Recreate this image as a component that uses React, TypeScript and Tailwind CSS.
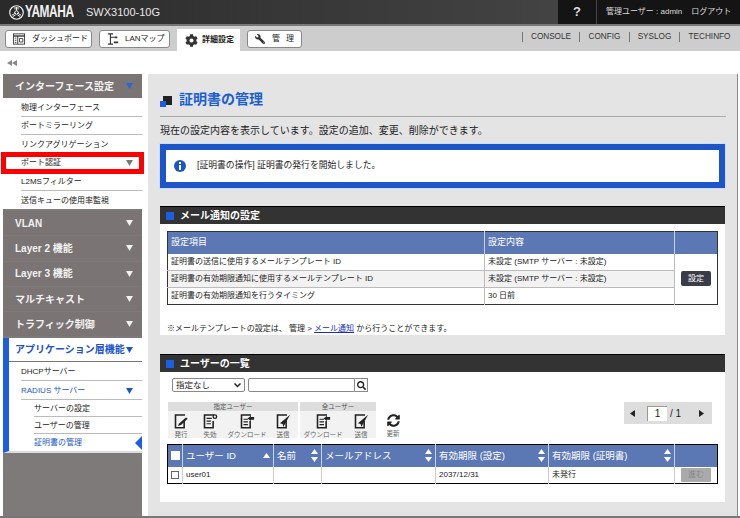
import { FaCog, FaSearch, FaSyncAlt, FaWrench } from "react-icons/fa";

const font = { fontFamily: '"Liberation Sans", "Noto Sans CJK JP", sans-serif' };

function Tri({ className = "" }: { className?: string }) {
  return (
    <svg width="7" height="6" viewBox="0 0 8 7" className={className}>
      <path d="M0 0h8L4 7z" fill="currentColor" />
    </svg>
  );
}

function YamahaMark() {
  return (
    <svg width="15" height="15" viewBox="0 0 30 30" fill="none" stroke="#eee">
      <circle cx="15" cy="15" r="13.5" strokeWidth="2.4" />
      <circle cx="15" cy="15" r="3.5" strokeWidth="2" />
      <path d="M15 11V4M12 4v5M18 4v5M11.6 17l-6 3.5M10 15l4 2.4M13 20l-5.5 3M18.4 17l6 3.5M20 15l-4 2.4M17 20l5.5 3" strokeWidth="2" />
    </svg>
  );
}

function DashIcon() {
  return (
    <svg width="12" height="12" viewBox="0 0 14 13" fill="none" stroke="#333">
      <rect x="0.5" y="0.5" width="13" height="12" />
      <path d="M0.5 3h13" strokeWidth="1.6" />
      <path d="M5.5 3v9.5" />
      <path d="M2 5.5h2M2 8h2M2 10.5h2M7.5 6h4v4h-4z" />
    </svg>
  );
}

function LanIcon() {
  return (
    <svg width="12" height="14" viewBox="0 0 14 14" fill="none" stroke="#333">
      <path d="M1 1h6M4 1v12M4 5h5M1 13h6" strokeWidth="1.3" />
      <path d="M9 4h3v2H9zM8 10h5v2H8z" fill="#333" stroke="none" />
    </svg>
  );
}

type DocKind = "issue" | "revoke" | "download" | "send";

function DocIcon({ kind }: { kind: DocKind }) {
  return (
    <svg width="15" height="15" viewBox="0 0 16 17" fill="none" className="text-[#222]">
      <path d="M11 8v7.5H1.200V1.200H12" stroke="currentColor" strokeWidth="1.800" />
      {kind === "issue" && <path d="M5 11l8-7 2 1.500-7.500 7L4 13.500z" fill="currentColor" />}
      {kind === "revoke" && (
        <>
          <path d="M3.500 5h6M3.500 8h5M3.500 11h5" stroke="currentColor" strokeWidth="1.300" />
          <circle cx="13" cy="3" r="2" stroke="currentColor" strokeWidth="1.500" />
        </>
      )}
      {kind === "download" && (
        <>
          <path d="M3.500 6h5M3.500 9h5M3.500 12h5" stroke="currentColor" strokeWidth="1.300" />
          <path d="M8 5l4-3v1.500h3.500v3H12V8z" fill="currentColor" />
        </>
      )}
      {kind === "send" && <path d="M15.500 0.800L4 10.500l3 .8.800 3.500z" fill="currentColor" />}
    </svg>
  );
}

function ToolBtn({ w, label, kind }: { w: string; label: string; kind: DocKind }) {
  return (
    <div className={`flex flex-col items-center bg-[#f2f2f2] h-[27px] pt-[3px] ${w}`}>
      <DocIcon kind={kind} />
      <span className="mt-[2px] text-[6.500px] leading-[7px] text-[#666] whitespace-nowrap">{label}</span>
    </div>
  );
}

function SortArrows() {
  return (
    <span className="flex flex-col gap-[3px] text-white">
      <svg width="7" height="5" viewBox="0 0 7 5"><path d="M0 5h7L3.500 0z" fill="currentColor" /></svg>
      <svg width="7" height="5" viewBox="0 0 7 5"><path d="M0 0h7L3.500 5z" fill="currentColor" /></svg>
    </span>
  );
}

function SectionHead({ title }: { title: string }) {
  return (
    <div className="h-[18px] bg-[#333] border-t border-black flex items-center pl-[6px] gap-[6px]">
      <span className="w-2 h-2 bg-[#1b5fe0]" />
      <span className="text-[10px] font-bold text-white">{title}</span>
    </div>
  );
}

function SideHead({ label }: { label: string }) {
  return (
    <div className="h-[24.300px] bg-[#7a7474] mb-px flex items-center justify-between pl-[12px] pr-[9px] text-[#f2f2f2] font-bold text-[10px]">
      {label}
      <Tri />
    </div>
  );
}

function SideRow({ label, className = "h-[18.500px]" }: { label: string; className?: string }) {
  return (
    <div className={`flex items-center pt-[2px] text-[8px] text-[#222] border-b border-[#bbb] ${className}`}>
      {label}
    </div>
  );
}

export default function App() {
  return (
    <div style={font} className="w-[740px] h-[518px] overflow-hidden bg-white flex flex-col text-[#222]">
      {/* top bar */}
      <div className="h-[24px] flex bg-gradient-to-r from-[#2a2a2a] to-[#4c4c4c]">
        <div className="flex-1 flex items-center pl-[9px]">
          <YamahaMark />
          <span className="ml-px w-[49px] origin-left scale-x-[.7] text-[17px] leading-[24px] font-bold text-[#f0f0f0] tracking-[-0.600px] whitespace-nowrap">YAMAHA</span>
          <span className="ml-[12px] text-[11px] text-[#e8e8e8]">SWX3100-10G</span>
        </div>
        <div className="w-[182px] bg-[#141414] flex items-center text-[#ddd]">
          <span className="w-[39px] text-center text-[13px] font-bold border-r border-[#444] leading-[24px]">?</span>
          <span className="ml-[9px] text-[8px] whitespace-nowrap">管理ユーザー : admin</span>
          <span className="ml-[9px] text-[8px] whitespace-nowrap">ログアウト</span>
        </div>
      </div>
      <div className="h-[2px] bg-[#777]" />

      {/* nav */}
      <div className="h-[25px] bg-[#cdcdcd] flex items-end pl-[5px]">
        <div className="flex gap-[7px] items-start h-[22px]">
          <div className="mt-px w-[87px] h-[18px] bg-white border border-[#888] rounded-[3px] flex items-center pl-[7px] gap-[7px] text-[8px] whitespace-nowrap">
            <DashIcon />
            ダッシュボード
          </div>
          <div className="mt-px w-[71px] h-[18px] bg-white border border-[#888] rounded-[3px] flex items-center pl-[7px] gap-[6px] text-[8px] whitespace-nowrap">
            <LanIcon />
            LANマップ
          </div>
          <div className="w-[63px] h-[22px] bg-white flex items-center pl-[8px] gap-[4px] text-[8px] font-bold whitespace-nowrap">
            <FaCog size={13} className="text-[#333]" />
            詳細設定
          </div>
          <div className="mt-px w-[55px] h-[18px] bg-white border border-[#888] rounded-[3px] flex items-center pl-[7px] gap-[7px] text-[8px] whitespace-nowrap">
            <FaWrench size={10} className="text-[#333] -scale-x-100" />
            <span className="tracking-[6px]">管理</span>
          </div>
        </div>
        <div className="ml-auto self-center mb-[4px] flex items-center text-[8.200px] text-[#333] pr-px">
          {["CONSOLE", "CONFIG", "SYSLOG", "TECHINFO"].map((t, i) => (
            <span key={t} className={`border-l border-[#777] h-[10px] leading-[10px] text-center ${["w-[57px]", "w-[50px]", "w-[50px]", "w-[60px]"][i]}`}>
              {t}
            </span>
          ))}
        </div>
      </div>

      {/* collapse row */}
      <div className="h-[23px] flex items-center pl-[7px] text-[#888]">
        <svg width="10" height="6" viewBox="0 0 10 6"><path d="M5 0v6L0 3zM10 0v6L5 3z" fill="currentColor" /></svg>
      </div>

      <div className="flex-1 min-h-0 flex pl-[3px] pr-[2px] border-b-2 border-[#777]">
        {/* sidebar */}
        <div className="relative w-[139px] shrink-0 bg-[#7f7a7a] flex flex-col">
          <div className="h-[24px] bg-[#7a7474] flex items-center justify-between pl-[12px] pr-[9px] text-[#f2f2f2] font-bold text-[10px]">
            インターフェース設定
            <Tri className="text-[#2466e0]" />
          </div>
          <div className="bg-white pl-[18px] mb-[2px]">
            <SideRow label="物理インターフェース" />
            <SideRow label="ポートミラーリング" />
            <SideRow label="リンクアグリゲーション" />
            <div className="h-[18.500px] flex items-center justify-between pt-[2px] pr-[9px] text-[8px] border-b border-[#bbb]">
              ポート認証
              <Tri className="text-[#777]" />
            </div>
            <SideRow label="L2MSフィルター" />
            <SideRow label="送信キューの使用率監視" className="h-[18.500px] border-b-0" />
          </div>
          <SideHead label="VLAN" />
          <SideHead label="Layer 2 機能" />
          <SideHead label="Layer 3 機能" />
          <SideHead label="マルチキャスト" />
          <SideHead label="トラフィック制御" />
          <div className="bg-white border-l-[6px] border-[#1b5fe0] mt-px border-b-2 border-b-[#ddd]">
            <div className="h-[24px] flex items-center justify-between pl-[6px] pr-[9px] text-[#1b55c8] font-bold text-[10px] border-b border-[#777]">
              <span className="whitespace-nowrap">アプリケーション層機能</span>
              <Tri className="shrink-0" />
            </div>
            <div className="pl-[12px]">
              <SideRow label="DHCPサーバー" className="h-[19px]" />
              <div className="h-[19px] flex items-center justify-between pt-[2px] pr-[9px] text-[8px] text-[#1b55c8] border-b border-[#bbb]">
                RADIUS サーバー
                <Tri />
              </div>
            </div>
            <div className="pl-[25px]">
              <SideRow label="サーバーの設定" className="h-[17px]" />
              <SideRow label="ユーザーの管理" className="h-[17px]" />
              <div className="relative h-[17px] flex items-center text-[8px] text-[#1b55c8]">
                証明書の管理
                <svg width="7" height="14" viewBox="0 0 7 14" className="absolute right-0 top-[2px]"><path d="M7 0v14L0 7z" fill="#1b5fe0" /></svg>
              </div>
            </div>
          </div>
          {/* highlight drawn over the menu */}
          <div className="absolute left-[-2px] top-[78px] w-[143px] h-[22px] border-[5px] border-[#f00]" />
        </div>

        {/* content */}
        <div className="flex-1 ml-[6px] bg-[#e4e4e4] border-r border-[#888] px-[12px] pt-[17px] text-[8px]">
          <div className="flex items-center gap-[7px] h-[18px] pb-px">
            <svg width="12" height="12" viewBox="0 0 12 12" className="mt-[2px]">
              <rect x="3" y="1" width="9" height="9" fill="#222" />
              <rect x="0" y="6" width="6" height="6" fill="#1b5fe0" />
            </svg>
            <span className="text-[14px] font-bold text-[#1b5fd0]">証明書の管理</span>
          </div>
          <div className="mt-[7px] border-t border-[#aaa] pt-[7px] text-[10px] leading-[14px] mr-[-1px]">
            現在の設定内容を表示しています。設定の追加、変更、削除ができます。
          </div>
          <div className="mt-[6px] h-[44px] bg-white border-[6px] border-[#1b55c8] outline outline-1 outline-[#cfdcf5] flex items-center pl-[8px] gap-[11px] text-[8.800px]">
            <svg width="12" height="12" viewBox="0 0 12 12">
              <circle cx="6" cy="6" r="6" fill="#1b55c8" />
              <rect x="5" y="2" width="2" height="2" fill="#fff" />
              <rect x="5" y="5" width="2" height="5" fill="#fff" />
            </svg>
            [証明書の操作] 証明書の発行を開始しました。
          </div>

          <div className="mt-[18px]">
            <SectionHead title="メール通知の設定" />
            <div className="bg-white h-[111px] pt-[7px] px-[7px]">
              <table className="w-full table-fixed border-collapse border border-[#333] text-[8px]">
                <thead>
                  <tr className="h-[22px] bg-[#5b78b5] text-white text-[9px] text-left">
                    <th className="w-[317px] font-normal pl-[3px] border-r border-[#c8d2e6]">設定項目</th>
                    <th className="w-[190px] font-normal pl-[3px] border-r border-[#c8d2e6]">設定内容</th>
                    <th className="font-normal"></th>
                  </tr>
                </thead>
                <tbody>
                  <tr className="h-[17px]">
                    <td className="pl-[3px] border-b border-r border-[#bbb]">証明書の送信に使用するメールテンプレート ID</td>
                    <td className="pl-[3px] border-b border-r border-[#bbb]">未設定 (SMTP サーバー : 未設定)</td>
                    <td rowSpan={3} className="text-center">
                      <span className="inline-block w-[30px] h-[15px] leading-[15px] bg-[#3a3c48] rounded-[2px] text-white text-[8px]">設定</span>
                    </td>
                  </tr>
                  <tr className="h-[17px] bg-[#f2f2f2]">
                    <td className="pl-[3px] border-b border-r border-[#bbb]">証明書の有効期限通知に使用するメールテンプレート ID</td>
                    <td className="pl-[3px] border-b border-r border-[#bbb]">未設定 (SMTP サーバー : 未設定)</td>
                  </tr>
                  <tr className="h-[17px]">
                    <td className="pl-[3px] border-r border-[#bbb]">証明書の有効期限通知を行うタイミング</td>
                    <td className="pl-[3px] border-r border-[#bbb]">30 日前</td>
                  </tr>
                </tbody>
              </table>
              <p className="mt-[17px] text-[8px] leading-[14px]">
                ※メールテンプレートの設定は、 管理 &gt; <span className="text-[#1a2ec0] underline">メール通知</span> から行うことができます。
              </p>
            </div>
          </div>

          <div className="mt-[19px]">
            <SectionHead title="ユーザーの一覧" />
            <div className="bg-white h-[130px] pt-[6px] px-[7px]">
              <div className="flex items-start pl-[5px] h-[14px]">
                <div className="w-[73px] h-[14px] border border-[#888] rounded-[2px] flex items-center justify-between px-[3px] text-[8.500px]">
                  指定なし
                  <svg width="7" height="5" viewBox="0 0 7 5" fill="none" stroke="#222" strokeWidth="1.500"><path d="M0.500 0.500l3 3 3-3" /></svg>
                </div>
                <div className="ml-[3px] w-[107px] h-[14px] border border-[#888] rounded-l-[2px]" />
                <div className="w-[13px] h-[14px] border border-l-0 border-[#888] flex items-center justify-center">
                  <FaSearch size={9} className="text-[#222]" />
                </div>
              </div>
              <div className="flex justify-between mt-[10px] h-[36px] pr-[6px]">
                <div className="flex gap-[2px] pl-px">
                  <div className="w-[130px]">
                    <div className="h-[9px] bg-[#ddd] text-center text-[6.500px] leading-[9px] text-[#555]">指定ユーザー</div>
                    <div className="flex">
                      <ToolBtn w="w-[26px]" label="発行" kind="issue" />
                      <ToolBtn w="w-[32px]" label="失効" kind="revoke" />
                      <ToolBtn w="w-[42px]" label="ダウンロード" kind="download" />
                      <ToolBtn w="w-[30px]" label="送信" kind="send" />
                    </div>
                  </div>
                  <div className="w-[76px]">
                    <div className="h-[9px] bg-[#ddd] text-center text-[6.500px] leading-[9px] text-[#555]">全ユーザー</div>
                    <div className="flex">
                      <ToolBtn w="w-[46px]" label="ダウンロード" kind="download" />
                      <ToolBtn w="w-[30px]" label="送信" kind="send" />
                    </div>
                  </div>
                  <div className="w-[30px] flex flex-col items-center pt-[12px]">
                    <FaSyncAlt size={13} className="text-[#222]" />
                    <span className="mt-[3px] text-[6.500px] leading-[7px] text-[#666]">更新</span>
                  </div>
                </div>
                <div className="w-[88px] h-[22px] bg-[#ddd] flex items-center pl-[6px] text-[10px]">
                  <svg width="5" height="7" viewBox="0 0 5 7"><path d="M5 0v7L0 3.500z" fill="#222" /></svg>
                  <span className="ml-[12px] w-[20px] h-[15px] bg-white border-t border-l border-[#999] text-center leading-[14px]">1</span>
                  <span className="ml-[3px]">/ 1</span>
                  <svg width="5" height="7" viewBox="0 0 5 7" className="ml-[18px]"><path d="M0 0v7l5-3.500z" fill="#222" /></svg>
                </div>
              </div>
              <table className="mt-[6px] w-full table-fixed border-collapse border border-black text-[8px]">
                <thead>
                  <tr className="h-[22px] bg-[#5b78b5] text-white text-[9.500px] text-left">
                    <th className="w-[15px] font-normal border-r border-[#c8d2e6]">
                      <span className="block w-[9px] h-[9px] bg-white mx-auto" />
                    </th>
                    <th className="w-[91px] font-normal border-r border-[#c8d2e6] px-[3px]">
                      <span className="flex items-center justify-between">
                        ユーザー ID
                        <svg width="7" height="5" viewBox="0 0 7 5"><path d="M0 5h7L3.500 0z" fill="#fff" /></svg>
                      </span>
                    </th>
                    <th className="w-[48px] font-normal border-r border-[#c8d2e6] px-[3px]">
                      <span className="flex items-center justify-between">名前<SortArrows /></span>
                    </th>
                    <th className="w-[114px] font-normal border-r border-[#c8d2e6] px-[3px]">
                      <span className="flex items-center justify-between">メールアドレス<SortArrows /></span>
                    </th>
                    <th className="w-[113px] font-normal border-r border-[#c8d2e6] px-[3px]">
                      <span className="flex items-center justify-between">有効期限 (設定)<SortArrows /></span>
                    </th>
                    <th className="w-[126px] font-normal border-r border-[#c8d2e6] px-[3px]">
                      <span className="flex items-center justify-between">有効期限 (証明書)<SortArrows /></span>
                    </th>
                    <th className="font-normal"></th>
                  </tr>
                </thead>
                <tbody>
                  <tr className="h-[17px]">
                    <td className="border-r border-[#ccc]">
                      <span className="block w-[8px] h-[8px] border border-[#666] mx-auto" />
                    </td>
                    <td className="px-[3px] border-r border-[#ccc]">user01</td>
                    <td className="border-r border-[#ccc]"></td>
                    <td className="border-r border-[#ccc]"></td>
                    <td className="px-[3px] border-r border-[#ccc]">2037/12/31</td>
                    <td className="px-[3px] border-r border-[#ccc]">未発行</td>
                    <td className="text-center">
                      <span className="block mx-auto w-[30px] h-[14px] leading-[14px] bg-[#aaa] rounded-[1px] text-[#888] text-[8px]">進む</span>
                    </td>
                  </tr>
                </tbody>
              </table>
            </div>
          </div>
        </div>
      </div>
    </div>
  );
}
